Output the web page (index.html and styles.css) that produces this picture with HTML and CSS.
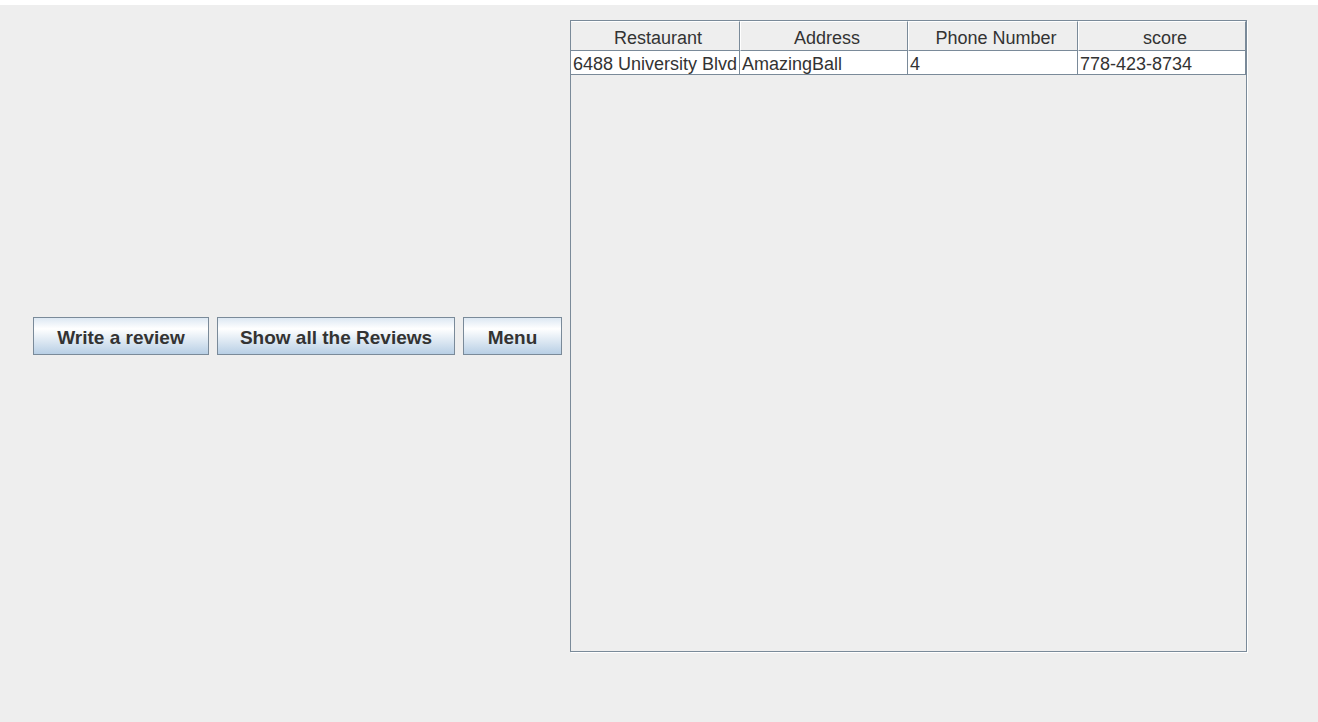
FILE: index.html
```html
<!DOCTYPE html>
<html>
<head>
<meta charset="utf-8">
<link rel="stylesheet" href="styles.css">
</head>
<body>
<div class="frame">
  <div class="panel">
    <div class="buttons">
      <button class="btn btn-write">Write a review</button>
      <button class="btn btn-show">Show all the Reviews</button>
      <button class="btn btn-menu">Menu</button>
    </div>
    <div class="scroll-pane">
      <div class="table">
        <div class="head">Restaurant</div>
        <div class="head">Address</div>
        <div class="head">Phone Number</div>
        <div class="head">score</div>
        <div class="cell">6488 University Blvd</div>
        <div class="cell">AmazingBall</div>
        <div class="cell">4</div>
        <div class="cell">778-423-8734</div>
      </div>
    </div>
  </div>
</div>
</body>
</html>
```

FILE: styles.css
```css
html, body {
  margin: 0;
  padding: 0;
  background: #ffffff;
}

.frame {
  margin-top: 5px;
  height: 717px;
  background: #eeeeee;
  font-family: "Liberation Sans", Arial, sans-serif;
  color: #333333;
}

.panel {
  display: flex;
  align-items: center;
  padding: 15px 0 0 33px;
  gap: 8px;
}

.buttons {
  display: flex;
  gap: 8px;
}

.btn {
  height: 38px;
  padding: 3px 0 0 0;
  box-sizing: border-box;
  border: 1px solid #7a8a99;
  border-radius: 0;
  background: linear-gradient(to bottom, #dde8f3 0%, #ffffff 30%, #b8cfe5 100%);
  font-family: "Liberation Sans", Arial, sans-serif;
  font-size: 19px;
  font-weight: bold;
  color: #333333;
  margin: 0;
  text-align: center;
}

.btn-write { width: 176px; }
.btn-show { width: 238px; }
.btn-menu { width: 99px; }

.scroll-pane {
  width: 677px;
  height: 632px;
  box-sizing: border-box;
  border: 1px solid #7a8a99;
  box-shadow: 1px 1px 0 #ffffff;
  background: #eeeeee;
}

.table {
  display: grid;
  grid-template-columns: 169px 168px 170px 168px;
  grid-template-rows: 30px 24px;
}

.head {
  box-sizing: border-box;
  border-right: 1px solid #7a8a99;
  border-bottom: 1px solid #7a8a99;
  border-left: 1px solid #ffffff;
  border-top: 1px solid #ffffff;
  display: flex;
  align-items: center;
  justify-content: center;
  font-size: 18px;
  color: #333333;
  padding-top: 4px;
  padding-left: 6px;
}

.head:first-child {
  border-left: none;
}

.cell {
  box-sizing: border-box;
  background: #ffffff;
  border-right: 1px solid #7a8a99;
  border-bottom: 1px solid #7a8a99;
  display: flex;
  align-items: center;
  padding-left: 2px;
  padding-top: 3px;
  font-size: 18px;
  color: #333333;
  white-space: nowrap;
  overflow: hidden;
}
```
